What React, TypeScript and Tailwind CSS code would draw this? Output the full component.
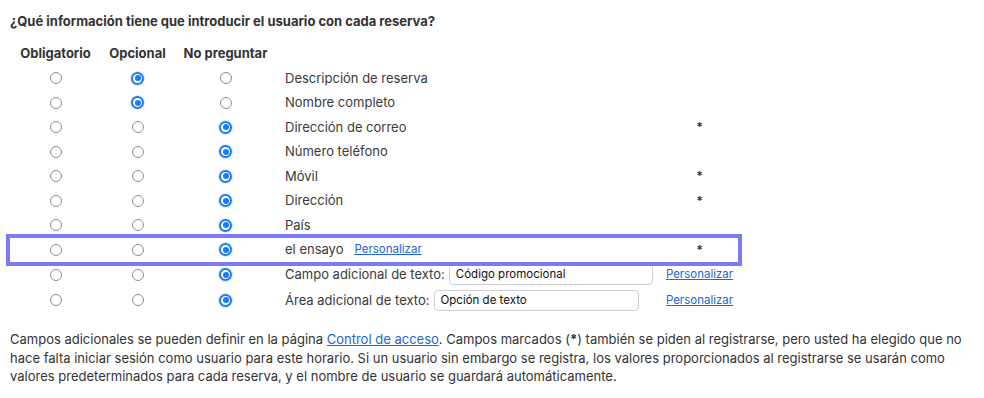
import React from "react";

type Row = {
  sel: 0 | 1 | 2;
  label: React.ReactNode;
  last?: React.ReactNode;
  hl?: boolean;
  tall?: boolean;
};

function Radio({ on }: { on: boolean }) {
  if (on) {
    return (
      <span className="flex h-[13px] w-[13px] items-center justify-center rounded-full border-2 border-[#1a7cf5] bg-white shadow-[0_0_0_1px_rgba(26,124,245,0.18)]">
        <span className="h-[6px] w-[6px] rounded-full bg-[#1a7cf5]" />
      </span>
    );
  }
  return <span className="block h-[12px] w-[12px] rounded-full border border-[#8e8e8e] bg-white" />;
}

const Link = ({ children }: { children: React.ReactNode }) => (
  <a href="#" className="text-[11.5px] text-[#2266d8] underline underline-offset-[1px]">
    {children}
  </a>
);

const Star = () => <span className="text-[12px] font-bold text-[#333]">*</span>;

export default function App() {
  const rows: Row[] = [
    { sel: 1, label: "Descripción de reserva" },
    { sel: 1, label: "Nombre completo" },
    { sel: 2, label: "Dirección de correo", last: <Star /> },
    { sel: 2, label: "Número teléfono" },
    { sel: 2, label: "Móvil", last: <Star /> },
    { sel: 2, label: "Dirección", last: <Star /> },
    { sel: 2, label: "País" },
    {
      sel: 2,
      hl: true,
      label: (
        <span className="flex items-center gap-[11px]">
          <span>el ensayo</span>
          <Link>Personalizar</Link>
        </span>
      ),
      last: <Star />,
    },
    {
      sel: 2,
      tall: true,
      label: (
        <span className="flex items-center">
          <span>Campo adicional de texto:</span>
          <span className="ml-[4px] flex h-[21px] w-[204px] items-center rounded-[4px] border border-[#cfcfcf] bg-white px-[6px] text-[11.5px] text-[#111]">
            Código promocional
          </span>
        </span>
      ),
      last: <Link>Personalizar</Link>,
    },
    {
      sel: 2,
      tall: true,
      label: (
        <span className="flex items-center">
          <span>Área adicional de texto:</span>
          <span className="ml-[4px] flex h-[21px] w-[205px] items-center rounded-[4px] border border-[#cfcfcf] bg-white px-[6px] text-[11.5px] text-[#111]">
            Opción de texto
          </span>
        </span>
      ),
      last: <Link>Personalizar</Link>,
    },
  ];

  const grid = "grid grid-cols-[91px_73px_103px_384px_77px] items-center";

  return (
    <div className="h-[398px] w-[984px] overflow-hidden bg-white px-[10px] pt-[12px] font-['Inter',sans-serif] text-[13px] text-[#333]">
      <h2 className="text-[13px] font-bold leading-[18px] text-[#333]">
        ¿Qué información tiene que introducir el usuario con cada reserva?
      </h2>
      <div className="mt-[12px] w-[728px]">
        <div className={`${grid} h-[24px] font-bold`}>
          <span className="text-center">Obligatorio</span>
          <span className="text-center">Opcional</span>
          <span className="text-center">No preguntar</span>
          <span />
          <span />
        </div>
        {rows.map((r, i) => (
          <div
            key={i}
            className={`${grid} ${r.tall ? "h-[25.5px]" : "h-[24.5px]"} ${
              r.hl ? "outline-[4px] outline-solid outline-[#7b7bf3]" : ""
            }`}
          >
            {[0, 1, 2].map((c) => (
              <span key={c} className="flex justify-center">
                <Radio on={r.sel === c} />
              </span>
            ))}
            <span className="pl-[8px] text-[#3a3a3a]">{r.label}</span>
            <span className="flex justify-center">{r.last}</span>
          </div>
        ))}
      </div>
      <p className="mt-[17px] w-[960px] leading-[18.5px] text-[#333]">
        Campos adicionales se pueden definir en la página{" "}
        <a href="#" className="text-[#2266d8] underline underline-offset-[1px]">
          Control de acceso
        </a>
        . Campos marcados (<b>*</b>) también se piden al registrarse, pero usted ha elegido que no hace falta
        iniciar sesión como usuario para este horario. Si un usuario sin embargo se registra, los valores
        proporcionados al registrarse se usarán como valores predeterminados para cada reserva, y el nombre de
        usuario se guardará automáticamente.
      </p>
    </div>
  );
}
